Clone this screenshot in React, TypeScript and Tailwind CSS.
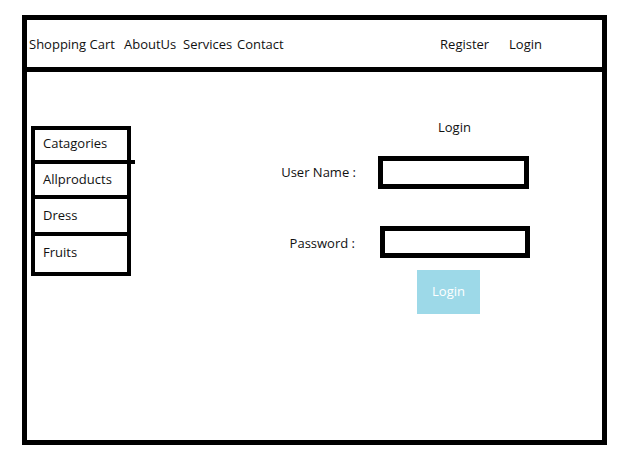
export default function App() {
  const categories = [
    { label: 'Allproducts', h: 'h-[35px]' },
    { label: 'Dress', h: 'h-[37px]' },
    { label: 'Fruits', h: 'h-[40px] pb-[3px]' },
  ];

  return (
    <div className="w-[632px] h-[460px] bg-white pt-[15px] pl-[22px] text-[13px] text-[#111] font-['Open_Sans',sans-serif]">
      <div className="flex flex-col w-[585px] h-[430px] border-[5px] border-black">
        {/* top nav */}
        <div className="flex items-center h-[52px] border-b-[5px] border-black pl-[2px] pt-[2px]">
          <span className="w-[95px]">Shopping Cart</span>
          <span className="w-[59px]">AboutUs</span>
          <span className="w-[54px]">Services</span>
          <span>Contact</span>
          <span className="ml-auto w-[69px]">Register</span>
          <span className="mr-[60px]">Login</span>
        </div>

        <div className="flex items-start">
          {/* categories */}
          <div className="relative mt-[54px] ml-[4px] w-[100px] border-[4px] border-black">
            <div className="flex items-center h-[30px] pl-[8px] pb-[3px]">Catagories</div>
            <div className="absolute right-[-8px] top-[30px] w-[6px] h-[4px] bg-black" />
            {categories.map((c) => (
              <div key={c.label} className={`flex items-center ${c.h} pl-[8px] border-t-[4px] border-black`}>
                {c.label}
              </div>
            ))}
          </div>

          {/* login form */}
          <div className="flex flex-col ml-[139px] mt-[45px] w-[260px]">
            <div className="pl-[168px] leading-[20px]">Login</div>
            <div className="flex items-center mt-[19px]">
              <span className="w-[86px] text-right">User Name :</span>
              <div className="ml-[22px] w-[151px] h-[33px] border-[5px] border-black" />
            </div>
            <div className="flex items-center mt-[37px]">
              <span className="w-[85px] text-right pt-[3px]">Password :</span>
              <div className="ml-[25px] w-[150px] h-[32px] border-[5px] border-black" />
            </div>
            <button className="ml-[147px] mt-[12px] w-[63px] h-[44px] bg-[#9dd9e8] text-white">Login</button>
          </div>
        </div>
      </div>
    </div>
  );
}
